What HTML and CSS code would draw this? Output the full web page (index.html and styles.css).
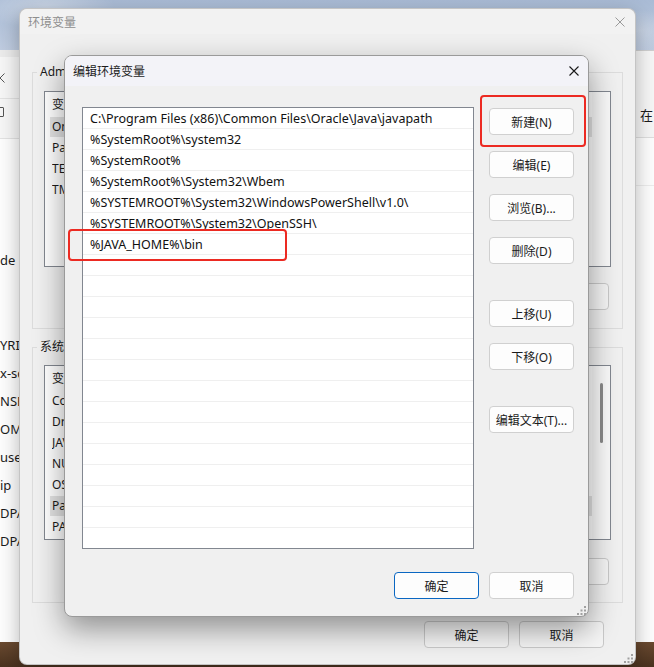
FILE: index.html
```html
<!DOCTYPE html>
<html lang="zh-CN">
<head>
<meta charset="utf-8">
<title>编辑环境变量</title>
<link rel="stylesheet" href="styles.css">
</head>
<body>
<div class="desktop">

  <div class="bgwin bgwin-left">
    <div class="lw-head lw-head-a">
      <svg class="ico-x" width="10" height="10" viewBox="0 0 10 10"><path d="M0.5 0.5 L9.5 9.5 M9.5 0.5 L0.5 9.5" stroke="#555" stroke-width="1" fill="none"/></svg>
    </div>
    <div class="lw-head lw-head-b"><span class="ico-max"></span></div>
    <div class="lw-body">
      <div class="lw-line lw-first">de</div>
      <div class="lw-list">
        <div class="lw-line">YRIGHT</div>
        <div class="lw-line">x-sdk</div>
        <div class="lw-line">NSE_KEY</div>
        <div class="lw-line">OMMON</div>
        <div class="lw-line">use</div>
        <div class="lw-line">ip</div>
        <div class="lw-line">DPATA</div>
        <div class="lw-line">DPATA</div>
      </div>
    </div>
  </div>

  <div class="bgwin bgwin-right">
    <div class="rw-head"><span>在</span></div>
    <div class="rw-row"></div>
  </div>

  <div class="win win-outer">
    <div class="ow-title">
      <span>环境变量</span>
      <svg width="10" height="10" viewBox="0 0 10 10"><path d="M0.5 0.5 L9.5 9.5 M9.5 0.5 L0.5 9.5" stroke="#9a9a9a" stroke-width="1" fill="none"/></svg>
    </div>
    <div class="ow-body">
      <div class="group">
        <div class="group-label">Administrator 的用户变量(U)</div>
        <div class="lb lb-user">
          <div class="lb-rows">
            <div class="lb-head"><span class="c1">变量</span></div>
            <div class="lb-row sel"><span class="c1">OneDrive</span></div>
            <div class="lb-row"><span class="c1">Path</span></div>
            <div class="lb-row"><span class="c1">TEMP</span></div>
            <div class="lb-row"><span class="c1">TMP</span></div>
          </div>
          <div class="vscroll"></div>
        </div>
        <div class="btn-row">
          <button class="btn btn-muted"></button>
          <button class="btn btn-muted"></button>
          <button class="btn btn-muted"></button>
        </div>
      </div>

      <div class="group group-sys">
        <div class="group-label">系统变量(S)</div>
        <div class="lb lb-sys">
          <div class="lb-rows">
            <div class="lb-head"><span class="c1">变量</span></div>
            <div class="lb-row"><span class="c1">ComSpec</span></div>
            <div class="lb-row"><span class="c1">DriverData</span></div>
            <div class="lb-row"><span class="c1">JAVA_HOME</span></div>
            <div class="lb-row"><span class="c1">NUMBER_OF_PROCESSORS</span></div>
            <div class="lb-row"><span class="c1">OS</span></div>
            <div class="lb-row sel"><span class="c1">Path</span></div>
            <div class="lb-row"><span class="c1">PATHEXT</span></div>
          </div>
          <div class="vscroll"><span class="thumb"></span></div>
        </div>
        <div class="btn-row">
          <button class="btn btn-muted"></button>
          <button class="btn btn-muted"></button>
          <button class="btn btn-muted"></button>
        </div>
      </div>
    </div>
    <div class="ow-foot">
      <button class="btn btn-muted">确定</button>
      <button class="btn btn-muted">取消</button>
    </div>
    <svg class="grip" width="9" height="9" viewBox="0 0 9 9"><g fill="#a0a0a0"><rect x="7" y="0" width="2" height="2"/><rect x="7" y="3.5" width="2" height="2"/><rect x="3.5" y="3.5" width="2" height="2"/><rect x="7" y="7" width="2" height="2"/><rect x="3.5" y="7" width="2" height="2"/><rect x="0" y="7" width="2" height="2"/></g></svg>
  </div>

  <div class="win win-dialog">
    <div class="dl-title">
      <span>编辑环境变量</span>
      <svg width="10" height="10" viewBox="0 0 10 10"><path d="M0.5 0.5 L9.5 9.5 M9.5 0.5 L0.5 9.5" stroke="#1a1a1a" stroke-width="1.1" fill="none"/></svg>
    </div>
    <div class="dl-main">
      <div class="dl-list">
        <div class="dl-row">C:\Program Files (x86)\Common Files\Oracle\Java\javapath</div>
        <div class="dl-row">%SystemRoot%\system32</div>
        <div class="dl-row">%SystemRoot%</div>
        <div class="dl-row">%SystemRoot%\System32\Wbem</div>
        <div class="dl-row">%SYSTEMROOT%\System32\WindowsPowerShell\v1.0\</div>
        <div class="dl-row">%SYSTEMROOT%\System32\OpenSSH\</div>
        <div class="dl-row">%JAVA_HOME%\bin</div>
        <div class="dl-row"></div>
        <div class="dl-row"></div>
        <div class="dl-row"></div>
        <div class="dl-row"></div>
        <div class="dl-row"></div>
        <div class="dl-row"></div>
        <div class="dl-row"></div>
        <div class="dl-row"></div>
        <div class="dl-row"></div>
        <div class="dl-row"></div>
        <div class="dl-row"></div>
        <div class="dl-row"></div>
        <div class="dl-row"></div>
        <div class="dl-row"></div>
        <div class="dl-row"></div>
      </div>
      <div class="dl-btns">
        <div class="btn-group">
          <button class="btn">新建(N)</button>
          <button class="btn">编辑(E)</button>
          <button class="btn">浏览(B)...</button>
          <button class="btn">删除(D)</button>
        </div>
        <div class="btn-group">
          <button class="btn">上移(U)</button>
          <button class="btn">下移(O)</button>
        </div>
        <div class="btn-group">
          <button class="btn">编辑文本(T)...</button>
        </div>
      </div>
    </div>
    <div class="dl-foot">
      <button class="btn btn-primary">确定</button>
      <button class="btn">取消</button>
    </div>
    <svg class="grip grip-dialog" width="9" height="9" viewBox="0 0 9 9"><g fill="#a0a0a0"><rect x="7" y="0" width="2" height="2"/><rect x="7" y="3.5" width="2" height="2"/><rect x="3.5" y="3.5" width="2" height="2"/><rect x="7" y="7" width="2" height="2"/><rect x="3.5" y="7" width="2" height="2"/><rect x="0" y="7" width="2" height="2"/></g></svg>
  </div>

  <div class="mark mark-new"></div>
  <div class="mark mark-java"></div>
</div>
</body>
</html>
```

FILE: styles.css
```css
* { box-sizing: border-box; }
html, body { margin: 0; padding: 0; }
body {
  font-family: "Noto Sans", "Noto Sans CJK SC", sans-serif;
  font-size: 12px;
  color: #1b1b1b;
}

.desktop {
  position: relative;
  width: 654px;
  height: 667px;
  overflow: hidden;
  background:
    radial-gradient(ellipse 70px 22px at 45px 6px, rgba(255,255,255,.35), rgba(255,255,255,0)),
    radial-gradient(ellipse 40px 20px at 640px 30px, rgba(255,255,255,.25), rgba(255,255,255,0)),
    linear-gradient(to bottom, #a9bbd5 0, #bfcce0 50px, #d6d6d6 52px, #d6d6d6 638px, #6a4a30 642px, #4a321f 667px);
}

/* background windows */
.bgwin {
  position: absolute;
  top: 50px;
  height: 592px;
  background: #fdfdfd;
  overflow: hidden;
  display: flex;
  flex-direction: column;
}
.bgwin-left { left: -120px; width: 145px; }
.bgwin-right { left: 628px; width: 40px; }

.lw-head {
  background: #f6f6f6;
  border-bottom: 1px solid #e2e2e2;
  display: flex;
  padding-left: 115px;
}
.lw-head-a {
  height: 49px;
  align-items: center;
  border-top: 7px solid #ebebeb;
}
.lw-head-b { height: 40px; padding-left: 114px; padding-top: 8px; }
.ico-max {
  width: 10px;
  height: 10px;
  border: 1px solid #555;
  border-radius: 1px;
}
.lw-body {
  padding-left: 120px;
  font-size: 13px;
  line-height: 28px;
  white-space: nowrap;
  color: #1b1b1b;
}
.lw-first { margin-top: 107px; }
.lw-list { margin-top: 57px; }

.rw-head {
  height: 88px;
  background: #f6f6f6;
  border-top: 1px solid #cfcfcf;
  border-bottom: 1px solid #dedede;
  padding: 56px 0 0 12px;
  font-size: 13px;
  line-height: 16px;
}
.rw-row { height: 48px; border-bottom: 1px solid #ececec; }

/* windows */
.win {
  position: absolute;
  background: #f0f0f0;
  border-radius: 8px;
  display: flex;
  flex-direction: column;
}
.win-outer {
  left: 19px;
  top: 8px;
  width: 617px;
  height: 657px;
  border: 1px solid rgba(0,0,0,.18);
  box-shadow: 0 6px 20px rgba(0,0,0,.28);
}
.ow-title {
  height: 25px;
  flex: none;
  display: flex;
  align-items: center;
  justify-content: space-between;
  padding: 0 10px 0 8px;
  color: #8e8e8e;
  background: #f2f2f2;
  border-radius: 8px 8px 0 0;
}
.ow-body { padding: 0 12px; margin-top: 38px; }

.group {
  border: 1px solid #dcdcdc;
  padding: 0 11px 18px;
}
.group-sys { margin-top: 18px; padding-bottom: 17px; }
.group-label {
  width: fit-content;
  margin: -9px 0 0 -7px;
  padding: 0 3px;
  line-height: 16px;
  background: #f0f0f0;
}

.lb {
  margin-top: 11px;
  height: 176px;
  background: #fff;
  border: 1px solid #828790;
  display: flex;
  overflow: hidden;
}
.lb-sys { margin-top: 10px; height: 175px; }
.lb-rows { flex: 1; min-width: 0; }
.lb-head {
  height: 25px;
  line-height: 25px;
  padding-left: 7px;
  display: flex;
  white-space: nowrap;
}
.lb-row {
  height: 20px;
  margin: 0 0 1px 5px;
  padding-left: 2px;
  line-height: 20px;
  display: flex;
  white-space: nowrap;
}
.lb-row.sel { background: #e3e3e3; }
.c1 { width: 150px; flex: none; overflow: hidden; }
.vscroll {
  width: 18px;
  flex: none;
  display: flex;
  justify-content: center;
  padding-top: 17px;
  background: #fafafa;
}
.thumb {
  width: 3px;
  height: 60px;
  background: #8a8a8a;
  border-radius: 2px;
}

.btn-row {
  margin-top: 16px;
  display: flex;
  justify-content: flex-end;
  gap: 10px;
  padding-right: 2px;
}
.group-sys .btn-row { margin-top: 18px; }

.ow-foot {
  margin-top: 18px;
  display: flex;
  justify-content: flex-end;
  gap: 10px;
  padding-right: 31px;
}

.btn {
  width: 85px;
  height: 27px;
  margin: 0;
  padding: 0;
  font: inherit;
  color: #1b1b1b;
  background: #fdfdfd;
  border: 1px solid #d0d0d0;
  border-radius: 4px;
  display: flex;
  align-items: center;
  justify-content: center;
  white-space: nowrap;
}
.btn-muted { background: #f5f5f5; border-color: #c9c9c9; }
.btn-primary { border-color: #0a67c2; }

.grip { position: absolute; right: 2px; bottom: 1px; }
.grip-dialog { right: 2px; bottom: 1px; }

/* dialog */
.win-dialog {
  left: 64px;
  top: 55px;
  width: 525px;
  height: 562px;
  border: 1px solid #9a9a9a;
  box-shadow: 0 12px 30px rgba(0,0,0,.4);
}
.dl-title {
  height: 30px;
  flex: none;
  background: #f3f3f8;
  border-radius: 7px 7px 0 0;
  display: flex;
  align-items: center;
  justify-content: space-between;
  padding: 0 9px 0 8px;
}
.dl-main {
  display: flex;
  gap: 15px;
  padding: 21px 14px 0 17px;
}
.dl-list {
  width: 392px;
  height: 442px;
  flex: none;
  background: #fff;
  border: 1px solid #828790;
  overflow: hidden;
}
.dl-row {
  height: 21px;
  border-bottom: 1px solid #efefef;
  padding: 2px 0 0 7px;
  font-size: 12.5px;
  line-height: 18px;
  white-space: nowrap;
  color: #111;
}
.dl-btns {
  width: 85px;
  padding-top: 1px;
  display: flex;
  flex-direction: column;
}
.btn-group { display: flex; flex-direction: column; gap: 16px; }
.btn-group + .btn-group { margin-top: 36px; }

.dl-foot {
  display: flex;
  justify-content: flex-end;
  gap: 10px;
  padding: 23px 14px 0 0;
}

/* red annotation marks */
.mark {
  position: absolute;
  border: 2.5px solid #ec2a22;
  border-radius: 4px;
}
.mark-new { left: 480px; top: 95px; width: 106px; height: 52px; }
.mark-java { left: 68px; top: 229px; width: 219px; height: 32px; }
```
